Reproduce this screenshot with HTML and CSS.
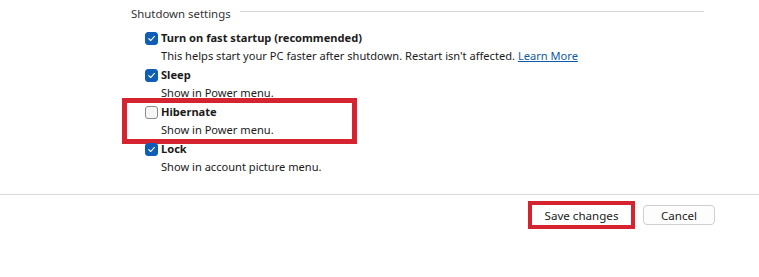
FILE: index.html
```html
<!DOCTYPE html>
<html lang="en">
<head>
<meta charset="utf-8">
<title>Shutdown settings</title>
<link rel="stylesheet" href="styles.css">
</head>
<body>
<div class="page">
  <section class="group">
    <div class="group-head">
      <span class="group-title">Shutdown settings</span>
      <span class="group-rule"></span>
    </div>
    <ul class="options">
      <li class="option">
        <div class="opt-title"><span class="box checked"><svg viewBox="0 0 12 12"><path d="M3 6.2 L5.1 8.2 L9.2 3.8"/></svg></span>Turn on fast startup (recommended)</div>
        <div class="opt-desc">This helps start your PC faster after shutdown. Restart isn't affected. <a class="link" href="#">Learn More</a></div>
      </li>
      <li class="option">
        <div class="opt-title"><span class="box checked"><svg viewBox="0 0 12 12"><path d="M3 6.2 L5.1 8.2 L9.2 3.8"/></svg></span>Sleep</div>
        <div class="opt-desc">Show in Power menu.</div>
      </li>
      <li class="option highlight">
        <div class="opt-title"><span class="box"></span>Hibernate</div>
        <div class="opt-desc">Show in Power menu.</div>
      </li>
      <li class="option">
        <div class="opt-title"><span class="box checked"><svg viewBox="0 0 12 12"><path d="M3 6.2 L5.1 8.2 L9.2 3.8"/></svg></span>Lock</div>
        <div class="opt-desc">Show in account picture menu.</div>
      </li>
    </ul>
  </section>
  <footer class="footer">
    <button class="btn btn-save" type="button">Save changes</button>
    <button class="btn btn-cancel" type="button">Cancel</button>
  </footer>
</div>
</body>
</html>
```
FILE: styles.css
```css
*, *::before, *::after { box-sizing: border-box; }
html, body {
  margin: 0;
  padding: 0;
  background: #ffffff;
}
body {
  font-family: "Noto Sans", "Open Sans", sans-serif;
  font-size: 11.1px;
  color: #1b1b1b;
}
.page {
  width: 759px;
  height: 277px;
}
.group {
  margin-left: 131px;
  width: 573px;
  height: 194px;
}
.group-head {
  display: flex;
  align-items: center;
  height: 24px;
  padding-top: 4px;
}
.group-title {
  color: #333;
  line-height: 18px;
  white-space: nowrap;
  font-size: 11.4px;
}
.group-rule {
  flex: 1;
  height: 1px;
  background: #d5d5d5;
  margin-left: 9px;
  margin-top: -5px;
}
.options {
  list-style: none;
  margin: 5px 0 0 0;
  padding: 0 0 0 14px;
}
.option {
  margin-bottom: 2px;
  position: relative;
}
.opt-title {
  display: flex;
  align-items: center;
  font-weight: 700;
  line-height: 18px;
  height: 18px;
}
.opt-desc {
  padding-left: 16px;
  line-height: 17px;
  white-space: nowrap;
}
.box {
  width: 13px;
  height: 13px;
  border-radius: 3px;
  border: 1px solid #8a8a8a;
  background: #f6f6f6;
  margin-right: 3px;
  flex: none;
  display: flex;
  align-items: center;
  justify-content: center;
}
.box.checked {
  background: #0f5db5;
  border-color: #0f5db5;
}
.box svg {
  width: 11px;
  height: 11px;
}
.box svg path {
  fill: none;
  stroke: #ffffff;
  stroke-width: 1.2;
  stroke-linecap: round;
  stroke-linejoin: round;
}
.link {
  color: #0f5aa8;
  text-decoration: underline;
}
.highlight::after {
  content: "";
  position: absolute;
  left: -23px;
  top: -5px;
  width: 235px;
  height: 46px;
  border: 5px solid #d52330;
}
.footer {
  border-top: 1px solid #dadada;
  display: flex;
  justify-content: flex-end;
  align-items: center;
  gap: 8px;
  padding: 6px 44px 0 0;
}
.btn {
  font-family: inherit;
  font-size: 11.6px;
  color: #1b1b1b;
  background: #fdfdfd;
  cursor: pointer;
  padding: 0;
}
.btn-save {
  width: 107px;
  height: 28px;
  border: 4px solid #d52330;
  background: #ffffff;
}
.btn-cancel {
  width: 72px;
  height: 20px;
  border: 1px solid #cfcfcf;
  border-radius: 4px;
}
```
